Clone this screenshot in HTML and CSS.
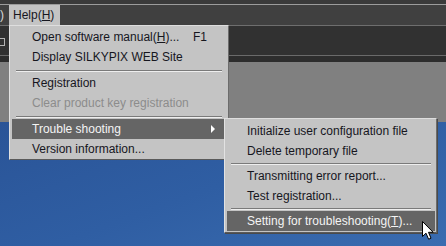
FILE: index.html
```html
<!DOCTYPE html>
<html lang="en">
<head>
    <meta charset="UTF-8">
    <title>SILKYPIX - Help menu</title>
    <link rel="stylesheet" href="styles.css">
</head>
<body>
    <div class="app">
        <div class="titlebar"></div>
        <div class="menubar">
            <span class="menubar-item cut">)</span>
            <span class="menubar-item active">Help(<u>H</u>)</span>
        </div>
        <div class="toolbar"><span class="tool-icon"></span></div>
        <div class="toolbar-edge"></div>
        <div class="panel"></div>
        <div class="desktop"></div>

        <!-- Help drop-down -->
        <div class="menu main-menu">
            <div class="item"><span>Open software manual(<u>H</u>)...</span><span class="key">F1</span></div>
            <div class="item">Display SILKYPIX WEB Site</div>
            <div class="sep"></div>
            <div class="item">Registration</div>
            <div class="item disabled">Clear product key registration</div>
            <div class="sep"></div>
            <div class="item selected"><span>Trouble shooting</span><span class="arrow"></span></div>
            <div class="item">Version information...</div>
        </div>

        <!-- Trouble shooting sub menu -->
        <div class="menu sub-menu">
            <div class="item">Initialize user configuration file</div>
            <div class="item">Delete temporary file</div>
            <div class="sep"></div>
            <div class="item">Transmitting error report...</div>
            <div class="item">Test registration...</div>
            <div class="sep"></div>
            <div class="item selected">Setting for troubleshooting(<u>T</u>)...</div>
        </div>

        <svg class="cursor" width="13" height="20" viewBox="0 0 13 20">
            <path d="M0.5 0.5 L0.5 15.5 L4 12.2 L6.6 18.2 L9 17.2 L6.5 11.3 L11.2 11.3 Z" fill="#ffffff" stroke="#000000" stroke-width="1" stroke-linejoin="miter"/>
        </svg>
    </div>
</body>
</html>
```

FILE: styles.css
```css
body {
    margin: 0;
    padding: 0;
    font-family: "Liberation Sans", Arial, sans-serif;
    font-size: 12px;
    background-color: #2b589c;
}
.app {
    position: relative;
    width: 446px;
    height: 246px;
    overflow: hidden;
}
.titlebar {
    height: 4px;
    background-color: #3a3a3a;
    border-bottom: 1px solid #9c9c9c;
}
.menubar {
    display: flex;
    height: 20px;
    background-color: #404040;
}
.menubar-item {
    line-height: 20px;
    padding: 0 4px;
    color: #d8d8d8;
    white-space: nowrap;
}
.menubar-item.cut {
    width: 9px;
    box-sizing: border-box;
    padding: 0;
}
.menubar-item.active {
    width: 51px;
    box-sizing: border-box;
    background-color: #c4c4c4;
    color: #16161e;
}
.toolbar {
    background-color: #313131;
    border-top: 1px solid #6e6e6e;
    border-bottom: 1px solid #6a6a6a;
    padding-top: 12px;
    height: 17px;
}
.tool-icon {
    display: block;
    width: 8px;
    height: 6px;
    margin-left: -5px;
    border: 1px solid #b4b4b4;
}
.toolbar-edge {
    height: 6px;
    background-color: #2d2d2d;
}
.panel {
    height: 60px;
    background-color: #808080;
}
.desktop {
    height: 124px;
    background: linear-gradient(160deg, #2a5497 0%, #2f5ea3 50%, #3a6cb0 100%);
}

/* popup menus */
.menu {
    position: absolute;
    box-sizing: border-box;
    background-color: #c4c4c4;
    color: #16161e;
    border-top: 1px solid #dedede;
    border-left: 1px solid #e2e2e2;
    border-right: 1px solid #6c6c6c;
    border-bottom: 1px solid #5a5a5a;
}
.main-menu {
    left: 9px;
    top: 25px;
    width: 220px;
    padding: 1px 4px 0 2px;
}
.sub-menu {
    left: 224px;
    top: 118px;
    width: 213px;
    padding: 2px 1px 1px 2px;
    box-shadow: 1px 1px 0 #4a4a4a;
}
.item {
    display: flex;
    align-items: center;
    height: 20px;
    padding: 0 17px 0 20px;
    white-space: nowrap;
}
.item .key {
    margin-left: auto;
}
.item.disabled {
    color: #8c8c8c;
}
.item.selected {
    background-color: #656565;
    color: #f4f4f4;
}
.arrow {
    margin-left: auto;
    margin-right: -8px;
    width: 0;
    height: 0;
    border-top: 4px solid transparent;
    border-bottom: 4px solid transparent;
    border-left: 4px solid #ffffff;
}
.sep {
    height: 6px;
    padding-top: 3px;
    box-sizing: border-box;
}
.sep::before {
    content: "";
    display: block;
    margin: 0 2px 0 4px;
    border-top: 1px solid #7a7a7a;
    border-bottom: 1px solid #eeeeee;
}
.sub-menu .sep {
    height: 5px;
    padding-top: 2px;
}
.sub-menu .sep::before {
    margin: 0 4px;
}
.cursor {
    position: absolute;
    left: 422px;
    top: 221px;
}
```
